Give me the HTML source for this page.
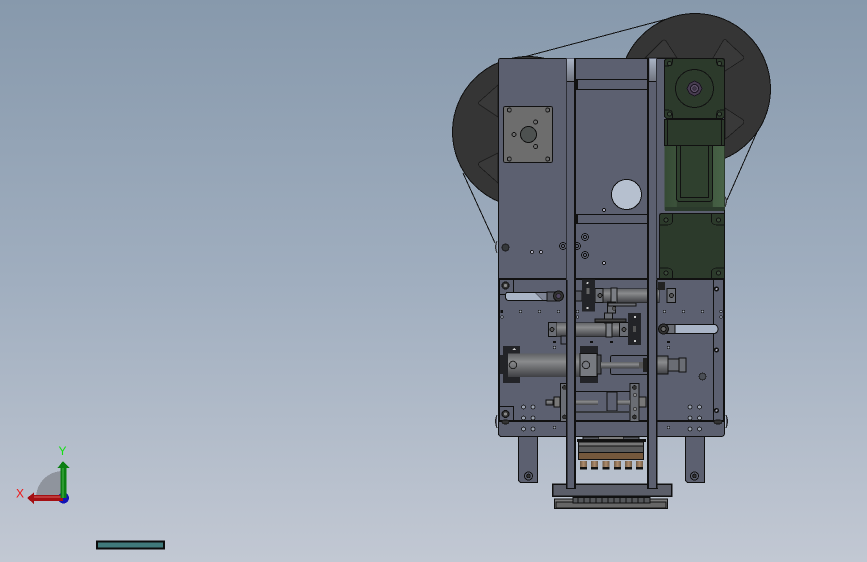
<!DOCTYPE html>
<html>
<head>
<meta charset="utf-8">
<style>
html,body{margin:0;padding:0;width:867px;height:562px;overflow:hidden;background:#a0aebd}
svg{display:block;position:absolute;left:0;top:0}
text{font-family:"Liberation Sans",sans-serif}
</style>
</head>
<body>
<svg width="867" height="562" viewBox="0 0 867 562" xmlns="http://www.w3.org/2000/svg" shape-rendering="crispEdges">
<defs>
<linearGradient id="bg" x1="0" y1="0" x2="0" y2="1">
<stop offset="0" stop-color="#8799ac"/>
<stop offset=".5" stop-color="#a0aebf"/>
<stop offset="1" stop-color="#c2c8d3"/>
</linearGradient>
<linearGradient id="cyl" x1="0" y1="0" x2="0" y2="1">
<stop offset="0" stop-color="#5f6164"/>
<stop offset=".35" stop-color="#8a8b8d"/>
<stop offset="1" stop-color="#3f4044"/>
</linearGradient>
<linearGradient id="col" x1="0" y1="0" x2="0" y2="1">
<stop offset="0" stop-color="#a9b3c4"/>
<stop offset="1" stop-color="#70747f"/>
</linearGradient>
<linearGradient id="green" x1="0" y1="0" x2="1" y2="0">
<stop offset="0" stop-color="#354a34"/>
<stop offset=".2" stop-color="#3c523b"/>
<stop offset=".21" stop-color="#2f402e"/>
<stop offset=".8" stop-color="#2f402e"/>
<stop offset=".81" stop-color="#435c42"/>
<stop offset="1" stop-color="#486347"/>
</linearGradient>
<linearGradient id="brown" x1="0" y1="0" x2="1" y2="0">
<stop offset="0" stop-color="#6f5a45"/>
<stop offset=".5" stop-color="#b08d6d"/>
<stop offset="1" stop-color="#6f5a45"/>
</linearGradient>
</defs>
<rect width="867" height="562" fill="url(#bg)"/>

<!-- belts -->
<g stroke="#111" stroke-width="1" fill="none">
<line x1="520" y1="58" x2="667" y2="19"/>
<line x1="463" y1="173" x2="495" y2="243"/>
<line x1="757" y1="132" x2="727" y2="200"/>
</g>

<!-- reels -->
<circle cx="695" cy="89" r="75.500" fill="#353535" stroke="#111"/>
<circle cx="528" cy="132" r="75.500" fill="#353535" stroke="#111"/>
<g fill="#393939" stroke="#1c1c1c" stroke-width=".8">
<path d="M645 58 L662 41 Q664 39 666 41 L677 58Z"/>
<path d="M713 58 L723 41 Q725 38 727 41 L743 56 Q745 58 742 60 L725 71Z"/>
<path d="M725 108 L742 119 Q745 121 743 124 L728 137 L725 139Z"/>
<path d="M498 85 L480 101 Q477 103 480 105 L498 117Z"/>
<path d="M498 153 L480 162 Q477 164 480 167 L498 183Z"/>
</g>

<!-- upper plate -->
<rect x="498.500" y="58.500" width="226" height="221" rx="2" fill="#5c6070" stroke="#111"/>
<rect x="576" y="79.500" width="72" height="10" fill="#5c6070" stroke="#111"/>
<rect x="576" y="214.500" width="72" height="9" fill="#5c6070" stroke="#111"/>
<rect x="575" y="79" width="3" height="11" fill="#111"/>
<rect x="575" y="214" width="3" height="10" fill="#111"/>

<!-- mount square -->
<rect x="503.500" y="106.500" width="49" height="56" rx="2" fill="#6d6d6d" stroke="#111"/>
<circle cx="528.500" cy="134.500" r="8" fill="#4d5150" stroke="#111"/>
<g fill="#6d6d6d" stroke="#111" stroke-width=".9">
<circle cx="509.300" cy="110" r="2"/><circle cx="547.700" cy="110" r="2"/>
<circle cx="509.300" cy="159" r="2"/><circle cx="547.700" cy="159" r="2"/>
<circle cx="535.600" cy="122" r="2"/><circle cx="535.600" cy="146.500" r="2"/>
<circle cx="514" cy="134.500" r="2"/>
</g>

<!-- hole -->
<circle cx="626.500" cy="194.500" r="15" fill="#b6c0cf" stroke="#111"/>
<circle cx="604" cy="210" r="1.600" fill="#aab" stroke="#111" stroke-width=".7"/>
<circle cx="604" cy="263" r="1.600" fill="#aab" stroke="#111" stroke-width=".7"/>
<g fill="none" stroke="#111" stroke-width=".9">
<circle cx="585" cy="237" r="3.500"/><circle cx="585" cy="237" r="1.500"/>
<circle cx="585" cy="255" r="3.500"/><circle cx="585" cy="255" r="1.500"/>
<circle cx="563" cy="246" r="3.500"/><circle cx="563" cy="246" r="1.500"/>
<circle cx="577" cy="246" r="3.500"/><circle cx="577" cy="246" r="1.500"/>
</g>
<circle cx="505.500" cy="247.500" r="3.500" fill="#35383a" stroke="#111" stroke-width=".8"/>
<circle cx="532" cy="252" r="1.500" fill="#aab" stroke="#111" stroke-width=".7"/>
<circle cx="541" cy="252" r="1.500" fill="#aab" stroke="#111" stroke-width=".7"/>
<path d="M497 241 Q494 247 497 253" fill="#7a8090" stroke="#333"/>

<!-- motor top -->
<rect x="664.500" y="58.500" width="60" height="60" rx="3" fill="#2c3a2b" stroke="#111"/>
<circle cx="694.500" cy="88.500" r="19" fill="none" stroke="#111"/>
<polygon points="694.500,81 699.500,83.500 702,88.500 699.500,93.500 694.500,96 689.500,93.500 687,88.500 689.500,83.500" fill="#473c50" stroke="#1a1420"/>
<circle cx="694.500" cy="88.500" r="4" fill="#5d5068" stroke="#1a1420"/>
<circle cx="694.500" cy="88.500" r="1.800" fill="#3f3648" stroke="#1a1420" stroke-width=".6"/>
<g fill="#3c4c3b" stroke="#111" stroke-width="1">
<circle cx="669.500" cy="63.500" r="2"/><circle cx="719.500" cy="63.500" r="2"/>
<circle cx="669.500" cy="114" r="2"/><circle cx="719.500" cy="114" r="2"/>
</g>
<path d="M664.500 66 h4 q4 0 4-4 v-3.500 M724.500 66 h-4 q-4 0-4-4 v-3.500 M664.500 110 h4 q4 0 4 4 v4 M724.500 110 h-4 q-4 0-4 4 v4" fill="none" stroke="#111" stroke-width=".7"/>
<!-- motor body -->
<rect x="664.500" y="146" width="60" height="64" fill="url(#green)"/>
<rect x="665" y="207" width="59" height="4" fill="#2b3a2c"/>
<path d="M676.500 146 V198 Q676.500 201.500 680 201.500 H709 Q712.500 201.500 712.500 198 V146" fill="none" stroke="#111"/>
<path d="M680.500 146 V197.500 H708.500 V146" fill="none" stroke="#111" stroke-width=".8"/>
<rect x="664.500" y="119.500" width="60" height="26" fill="#2c3a2b" stroke="#111"/>
<line x1="667.500" y1="119.500" x2="667.500" y2="145" stroke="#111" stroke-width=".9"/>
<line x1="721.500" y1="119.500" x2="721.500" y2="145" stroke="#111" stroke-width=".9"/>
<path d="M725 197 q3 3 0 10" fill="#7a8090" stroke="#333"/>
<!-- motor lower -->
<path d="M659.500 216 Q659.500 213.500 662 213.500 H724.500 V279 H659.500Z" fill="#2c3a2b" stroke="#111"/>
<g fill="#3c4c3b" stroke="#111" stroke-width="1">
<circle cx="666" cy="220" r="2"/><circle cx="718.500" cy="220" r="2"/>
<circle cx="666" cy="273" r="2"/><circle cx="718.500" cy="273" r="2"/>
</g>
<path d="M659.500 225 h8 q3 0 5-3 v-8 M724.500 225 h-8 q-3 0-5-3 v-8 M659.500 268 h8 q3 0 5 3 v8 M724.500 268 h-8 q-3 0-5 3 v8" fill="none" stroke="#111" stroke-width=".7"/>

<!-- legs -->
<path d="M518.500 436 V479 Q518.500 482.500 522 482.500 H537.500 V436Z" fill="#5c6070" stroke="#111"/>
<path d="M685.500 436 V479 Q685.500 482.500 689 482.500 H704.500 V436Z" fill="#5c6070" stroke="#111"/>
<g fill="none" stroke="#111">
<circle cx="528.500" cy="476" r="4"/><circle cx="528.500" cy="476" r="1.800" fill="#333"/>
<circle cx="694.500" cy="476" r="4"/><circle cx="694.500" cy="476" r="1.800" fill="#333"/>
</g>

<!-- gripper -->
<rect x="583" y="437" width="16" height="5" fill="#55585f" stroke="#111" stroke-width=".8"/>
<rect x="623" y="437" width="16" height="5" fill="#55585f" stroke="#111" stroke-width=".8"/>
<rect x="599" y="437" width="24" height="5" fill="#7b7b7b"/>
<rect x="577" y="439" width="69" height="3" fill="#111"/>
<rect x="578.500" y="442" width="65" height="4" fill="#777" stroke="#111"/>
<rect x="578.500" y="446" width="65" height="6.500" fill="#5a5a5a" stroke="#111"/>
<rect x="578.500" y="452.500" width="65" height="7" fill="#75583c" stroke="#111"/>
<g>
<rect x="580" y="461" width="7" height="7" fill="url(#brown)"/>
<rect x="591" y="461" width="7" height="7" fill="url(#brown)"/>
<rect x="602.500" y="461" width="7" height="7" fill="url(#brown)"/>
<rect x="614" y="461" width="7" height="7" fill="url(#brown)"/>
<rect x="625" y="461" width="7" height="7" fill="url(#brown)"/>
<rect x="636" y="461" width="7" height="7" fill="url(#brown)"/>
</g>
<g fill="#111">
<rect x="580" y="467" width="7" height="2.500"/><rect x="591" y="467" width="7" height="2.500"/>
<rect x="602.500" y="467" width="7" height="2.500"/><rect x="614" y="467" width="7" height="2.500"/>
<rect x="625" y="467" width="7" height="2.500"/><rect x="636" y="467" width="7" height="2.500"/>
</g>

<!-- base -->
<rect x="552.500" y="484" width="119" height="12" fill="#5b5e69" stroke="#111" stroke-width="1.500"/>
<rect x="554.500" y="499" width="113" height="9.500" fill="#7a7a7a" stroke="#111"/>
<rect x="556" y="502" width="110" height="6" fill="#666" stroke="#111" stroke-width=".7"/>
<rect x="573" y="497.500" width="77" height="5.500" fill="#55575a" stroke="#111" stroke-width=".8"/>
<path d="M578 497.500v5.500M584 497.500v5.500M590 497.500v5.500M596 497.500v5.500M602 497.500v5.500M608 497.500v5.500M614 497.500v5.500M620 497.500v5.500M626 497.500v5.500M632 497.500v5.500M638 497.500v5.500M644 497.500v5.500" stroke="#111" stroke-width=".7"/>

<!-- lower plate -->
<path d="M498.500 279.500 H724.500 V433 Q724.500 436.500 721 436.500 H502 Q498.500 436.500 498.500 433Z" fill="#5c6070" stroke="#111"/>
<rect x="498" y="278" width="227" height="2" fill="#111"/>
<rect x="498" y="420" width="227" height="2" fill="#111"/>
<rect x="498" y="280" width="2" height="140" fill="#111"/>
<rect x="723" y="280" width="2" height="140" fill="#111"/>
<path d="M497 415 Q494 421 497 428 M726 415 Q729 421 726 428" fill="#5c6070" stroke="#222"/>
<line x1="713.500" y1="280" x2="713.500" y2="420" stroke="#111" stroke-width=".8"/>

<!-- corner blocks -->
<path d="M499 294.500 H513.500 V280" fill="none" stroke="#111" stroke-width=".7"/>
<path d="M499 406.500 H513.500 V420" fill="none" stroke="#111" stroke-width=".7"/>
<g fill="#333" stroke="#111">
<circle cx="505.500" cy="285.500" r="3.500"/><circle cx="505.500" cy="414" r="3.500"/>
</g>
<circle cx="505.500" cy="285.500" r="1.500" fill="#888"/><circle cx="505.500" cy="414" r="1.500" fill="#888"/>
<rect x="502" y="420" width="7" height="4" rx="2" fill="#333" stroke="#111" stroke-width=".6"/>
<rect x="714" y="420" width="8" height="4" rx="2" fill="#333" stroke="#111" stroke-width=".6"/>
<g fill="#111"><circle cx="716.500" cy="289" r="2.600"/><circle cx="716.500" cy="350" r="2.600"/><circle cx="716.500" cy="410.500" r="2.600"/></g>
<g fill="#aab"><circle cx="716.500" cy="289" r="1"/><circle cx="716.500" cy="350" r="1"/><circle cx="716.500" cy="410.500" r="1"/></g>

<!-- slots -->
<path d="M507 292.500 H547 V300.500 H509 Q505.500 300.500 505.500 296.500 Q505.500 292.500 507 292.500Z" fill="#aab5c7" stroke="#111"/>
<path d="M535 292.500 H547 V300.500 H543Z" fill="#7f8595" stroke="#111" stroke-width=".7"/>
<rect x="547" y="292" width="10" height="9" fill="#565963" stroke="#111" stroke-width=".8"/>
<circle cx="558.500" cy="296" r="5" fill="#333" stroke="#111"/>
<circle cx="558.500" cy="296" r="2.500" fill="#4f4560" stroke="#222"/>
<rect x="574" y="291" width="8" height="10" fill="#565963" stroke="#111" stroke-width=".7"/>
<path d="M675 324.500 H715 Q718 326 718 329 Q718 332 715 333.500 H675Z" fill="#aab5c7" stroke="#111"/>
<rect x="664" y="324.500" width="11" height="9" fill="#6a6d74" stroke="#111" stroke-width=".8"/>
<circle cx="663.500" cy="329" r="5" fill="#333" stroke="#111"/>
<circle cx="663.500" cy="329" r="2.500" fill="#666" stroke="#111"/>

<!-- small holes -->
<g fill="#9aa2b0" stroke="#111" stroke-width=".7">
<circle cx="502" cy="317" r="1.300"/><circle cx="520.500" cy="311.500" r="1.300"/><circle cx="539.500" cy="311.500" r="1.300"/><circle cx="558.500" cy="311.500" r="1.300"/>
<circle cx="577.500" cy="311.500" r="1.300"/><circle cx="577.500" cy="317" r="1.300"/><circle cx="664.500" cy="311.500" r="1.300"/><circle cx="683.500" cy="311.500" r="1.300"/><circle cx="702.500" cy="311.500" r="1.300"/>
<circle cx="721" cy="311.500" r="1.300"/><circle cx="721" cy="317" r="1.300"/><circle cx="554.500" cy="347.500" r="1.300"/><circle cx="668.500" cy="347.500" r="1.300"/>
<circle cx="523.500" cy="407" r="2"/><circle cx="533" cy="407" r="2"/><circle cx="523.500" cy="418" r="2"/><circle cx="533" cy="418" r="2"/>
<circle cx="690" cy="407" r="2"/><circle cx="699.500" cy="407" r="2"/><circle cx="690" cy="418" r="2"/><circle cx="699.500" cy="418" r="2"/>
<circle cx="523.500" cy="429" r="2"/><circle cx="533" cy="429" r="2"/><circle cx="690" cy="429" r="2"/><circle cx="699.500" cy="429" r="2"/>
<circle cx="554.500" cy="427.500" r="1.300"/><circle cx="668.500" cy="427.500" r="1.300"/>
</g>
<rect x="500.500" y="310" width="2.500" height="3" fill="#111"/>
<rect x="553" y="341" width="3" height="2" fill="#111"/><rect x="590" y="341" width="3" height="2" fill="#111"/><rect x="610" y="341" width="3" height="2" fill="#111"/><rect x="667" y="341" width="3" height="2" fill="#111"/>
<circle cx="702.500" cy="376.500" r="3.500" fill="#4a4e55" stroke="#111" stroke-width=".7"/>

<!-- top cylinder -->
<rect x="595" y="288.500" width="8" height="14" fill="#6a6d74" stroke="#111" stroke-width=".8"/>
<circle cx="600" cy="295.500" r="2" fill="#555" stroke="#111" stroke-width=".8"/>
<rect x="603" y="288.500" width="56" height="14" fill="url(#cyl)" stroke="#111" stroke-width=".5"/>
<rect x="611" y="288" width="6" height="15" fill="#7b7e84" stroke="#111" stroke-width=".7"/>
<rect x="667" y="288.500" width="8.500" height="14" fill="#6a6d74" stroke="#111" stroke-width=".8"/>
<circle cx="671.500" cy="295.500" r="2" fill="#555" stroke="#111" stroke-width=".8"/>
<rect x="582" y="279.500" width="13" height="32" fill="#232428"/>
<rect x="586.500" y="288" width="3" height="6" fill="#666"/><circle cx="587.500" cy="308" r="1.200" fill="#ccc"/><circle cx="587.500" cy="283" r="1" fill="#ccc"/>
<rect x="607.500" y="302" width="8" height="11" fill="#6a6d74" stroke="#111" stroke-width=".8"/>
<circle cx="614" cy="308.500" r="1.800" fill="#555" stroke="#111" stroke-width=".7"/>
<rect x="608" y="303" width="28" height="3" fill="#6a6d74" stroke="#111" stroke-width=".7"/>
<rect x="658" y="282" width="7" height="8" fill="#222"/>

<!-- middle cylinder -->
<rect x="548.500" y="322.500" width="8" height="14" fill="#6a6d74" stroke="#111" stroke-width=".8"/>
<circle cx="552" cy="329.500" r="2" fill="#555" stroke="#111" stroke-width=".8"/>
<rect x="556" y="322.500" width="65" height="14" fill="url(#cyl)" stroke="#111" stroke-width=".5"/>
<rect x="606" y="322" width="6" height="15" fill="#7b7e84" stroke="#111" stroke-width=".7"/>
<rect x="619.500" y="322.500" width="10" height="14" fill="#6a6d74" stroke="#111" stroke-width=".8"/>
<circle cx="624" cy="329.500" r="2" fill="#555" stroke="#111" stroke-width=".8"/>
<rect x="628" y="313" width="13" height="32" fill="#232428"/>
<circle cx="635" cy="317" r="1.200" fill="#ccc"/><circle cx="635" cy="341" r="1.200" fill="#ccc"/><rect x="633" y="326" width="3" height="6" fill="#555"/>
<rect x="604.500" y="313" width="8" height="10" fill="#6a6d74" stroke="#111" stroke-width=".8"/>
<rect x="595" y="319" width="31" height="3" fill="#444" stroke="#111" stroke-width=".7"/>
<rect x="561" y="336" width="10" height="8" fill="#5c6070" stroke="#111" stroke-width=".8"/>

<!-- big cylinder -->
<rect x="503" y="346" width="17" height="37" fill="#232428"/>
<rect x="500" y="355" width="4" height="19" fill="#232428"/>
<rect x="508" y="353.500" width="72" height="23.500" fill="url(#cyl)"/>
<circle cx="513" cy="365" r="3.800" fill="none" stroke="#222"/>
<path d="M512 350 l2-2 2 2z" fill="#ccc"/>
<rect x="580" y="346" width="18" height="37" fill="#232428"/>
<rect x="580" y="353.500" width="17" height="23" fill="#777a80" stroke="#111" stroke-width=".8"/>
<circle cx="586" cy="365" r="3.800" fill="none" stroke="#222"/>
<rect x="597" y="355" width="4" height="19" fill="#4d4f54" stroke="#111" stroke-width=".6"/>
<rect x="610.500" y="355.500" width="47" height="19" rx="2" fill="none" stroke="#111"/>
<rect x="601" y="362" width="38" height="6.500" fill="url(#cyl)"/>
<rect x="639" y="362" width="4" height="6.500" fill="#555"/>
<rect x="643" y="358" width="5" height="14" fill="#222"/>
<rect x="657" y="356" width="11" height="18" fill="url(#cyl)" stroke="#111" stroke-width=".8"/>
<rect x="668" y="359" width="11" height="12" fill="#6a6d74" stroke="#111" stroke-width=".7"/>
<rect x="679" y="358" width="7" height="14" fill="#6a6d74" stroke="#111"/>

<!-- bottom linkage -->
<rect x="560.500" y="383.500" width="7" height="38" fill="#6a6d74" stroke="#111" stroke-width=".8"/>
<rect x="630" y="383.500" width="9" height="38" fill="#6a6d74" stroke="#111" stroke-width=".8"/>
<g fill="#333" stroke="#111" stroke-width=".6"><circle cx="634.500" cy="387.500" r="2"/><circle cx="634.500" cy="417" r="2"/><circle cx="564.500" cy="387.500" r="2"/><circle cx="564.500" cy="417" r="2"/></g>
<circle cx="635" cy="395" r="1.400" fill="#888" stroke="#111" stroke-width=".6"/><circle cx="635" cy="409" r="1.400" fill="#888" stroke="#111" stroke-width=".6"/>
<rect x="546" y="400" width="7" height="5" fill="url(#cyl)" stroke="#111" stroke-width=".6"/>
<rect x="554" y="397" width="6" height="10" fill="#777" stroke="#111" stroke-width=".7"/>
<rect x="639" y="397" width="7" height="10" fill="#777" stroke="#111" stroke-width=".7"/>
<rect x="576" y="400" width="22" height="5" fill="url(#cyl)"/>
<rect x="617" y="400" width="13" height="5" fill="url(#cyl)"/>
<path d="M576 391.500 H630 M576 411.500 H630" stroke="#111" stroke-width=".8" fill="none"/>
<rect x="607" y="392" width="10" height="19" fill="none" stroke="#111" stroke-width=".8"/>
<rect x="576" y="411" width="54" height="2" fill="#35373b"/>

<!-- vertical columns -->
<g>
<rect x="566.500" y="58" width="8" height="431" fill="#5c6070"/>
<rect x="649" y="58" width="7.500" height="431" fill="#5c6070"/>
<rect x="567" y="59" width="7" height="22" fill="url(#col)"/>
<rect x="649.500" y="59" width="6.500" height="22" fill="url(#col)"/>
<g fill="#111">
<rect x="574" y="58" width="2" height="431"/>
<rect x="566" y="280" width="1.500" height="209"/>
<rect x="647" y="58" width="2" height="431"/>
<rect x="656" y="280" width="1.500" height="209"/>
<rect x="567" y="81" width="7" height="1"/>
<rect x="649" y="81" width="7" height="1"/>
<rect x="566" y="488" width="10" height="1"/>
<rect x="647" y="488" width="11" height="1"/>
</g>
<rect x="566" y="59" width="1" height="220" fill="#2d2f36"/>
<rect x="656" y="59" width="1" height="220" fill="#2d2f36"/>
</g>

<!-- triad -->
<path d="M36 498 A27 27 0 0 1 63 471 V498Z" fill="#8f949d"/>
<circle cx="63.500" cy="498" r="5.500" fill="#1313b5"/>
<path d="M27 498 L34 492.500 V495 H63 V501 H34 V504Z" fill="#a40f12"/>
<rect x="34" y="496" width="29" height="2" fill="#c74b4b" opacity=".7"/>
<path d="M63 461 L69.500 468 H66.500 V498 H60.500 V468 H57.500Z" fill="#0c7f12"/>
<rect x="62" y="468" width="2" height="30" fill="#3aa53d" opacity=".7"/>
<text x="16" y="497.500" font-size="12" fill="#f01515">X</text>
<text x="58.500" y="455" font-size="12" fill="#15e015">Y</text>

<!-- scale bar -->
<rect x="97" y="541.500" width="67" height="7" fill="#40797a" stroke="#0c0c0c" stroke-width="2"/>
</svg>
</body>
</html>
